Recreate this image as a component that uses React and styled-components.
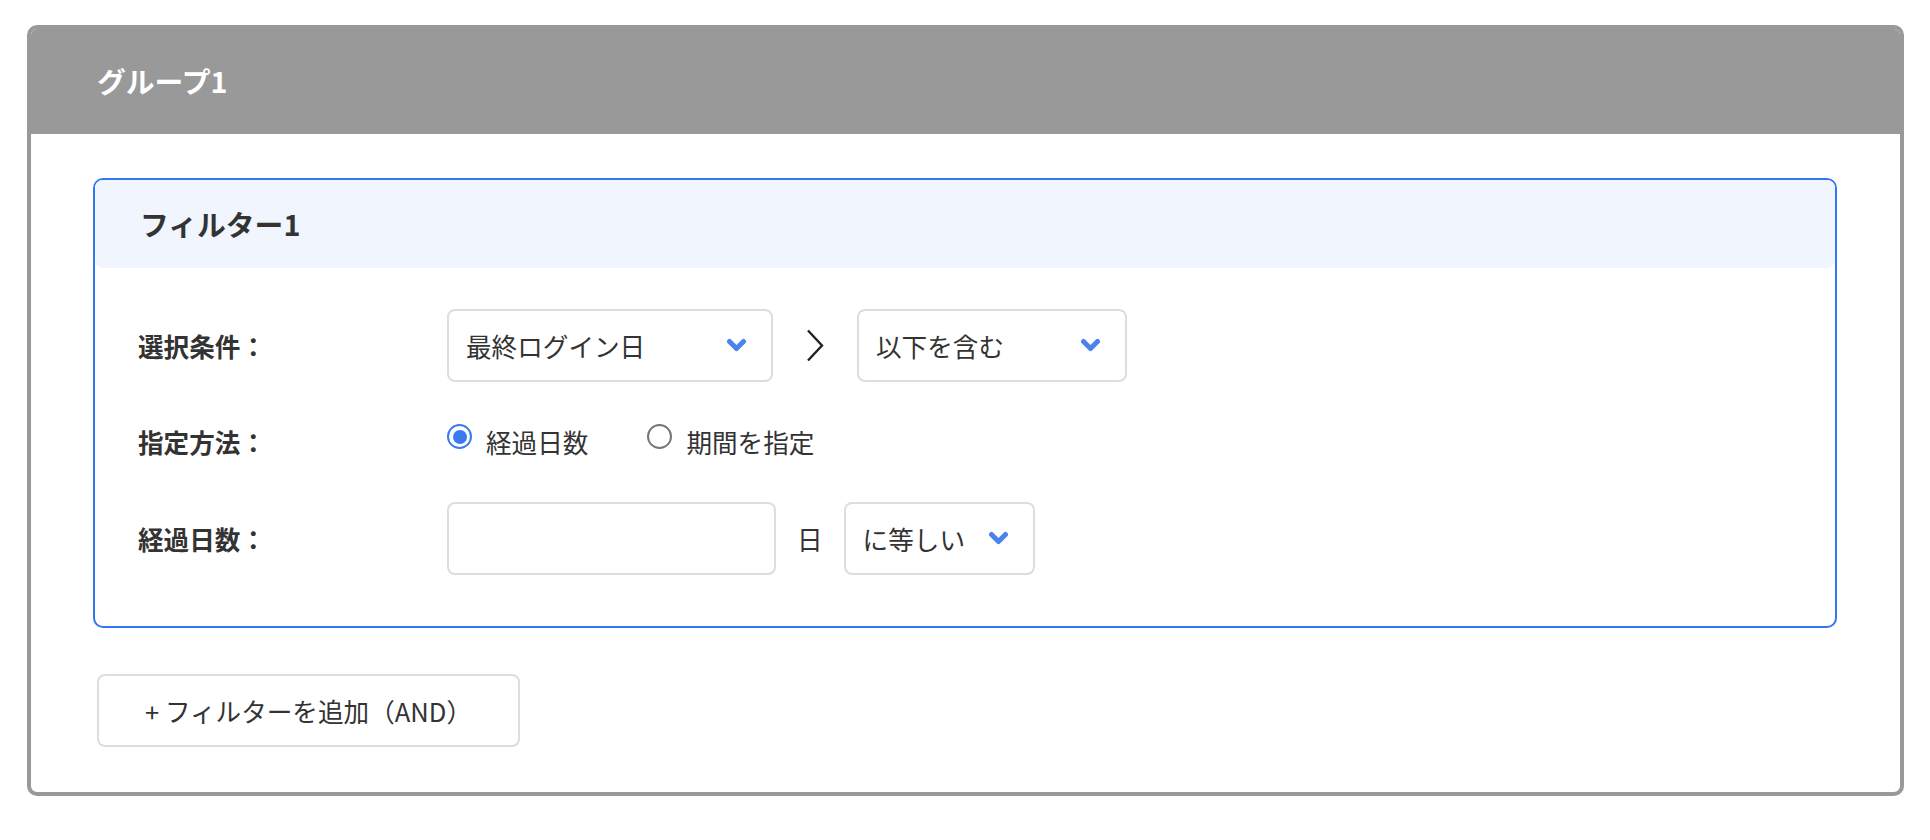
import React, { useState } from 'react';
import styled, { createGlobalStyle } from 'styled-components';

const GlobalStyle = createGlobalStyle`
    html, body {
        margin: 0;
        padding: 0;
        background: #fff;
    }
    body {
        font-family: "Noto Sans CJK JP", "Noto Sans", sans-serif;
        color: #333;
    }
`;

const Page = styled.div`
    padding: 25px 26px 25px 27px;
`;

const Group = styled.section`
    border: 4px solid #999;
    border-radius: 10px;
    overflow: hidden;
`;

const GroupHeader = styled.div`
    height: 105px;
    background: #999;
    display: flex;
    align-items: center;
    padding-left: 66px;
`;

const GroupTitle = styled.h2`
    margin: 0;
    font-size: 28.8px;
    font-weight: 700;
    line-height: 1;
    color: #fff;
`;

const GroupBody = styled.div`
    padding: 44px 63px 45px 62px;
`;

const Filter = styled.div`
    border: 2px solid #3476f2;
    border-radius: 10px;
`;

const FilterHeader = styled.div`
    height: 88px;
    background: #f1f6fe;
    border-radius: 8px;
    display: flex;
    align-items: center;
    padding-left: 45px;
`;

const FilterTitle = styled.h3`
    margin: 0;
    font-size: 28.8px;
    font-weight: 700;
    line-height: 1;
    color: #333;
`;

const FilterBody = styled.div`
    padding: 41px 43px 51px;
    display: flex;
    flex-direction: column;
    gap: 40px;
`;

const Row = styled.div`
    display: flex;
    align-items: center;
    min-height: ${props => props.height || '73px'};
`;

const Label = styled.div`
    width: 309px;
    flex-shrink: 0;
    font-size: 25.6px;
    font-weight: 700;
    line-height: 1;
    color: #333;
`;

const Controls = styled.div`
    display: flex;
    align-items: center;
    gap: ${props => props.gap || '21px'};
`;

const Select = styled.div`
    box-sizing: border-box;
    flex-shrink: 0;
    width: ${props => props.width || 'auto'};
    height: 73px;
    border: 2px solid #ddd;
    border-radius: 8px;
    background: #fff;
    display: flex;
    align-items: center;
    justify-content: space-between;
    gap: 23px;
    padding: 0 24px 0 17px;
    font-size: 25.6px;
    line-height: 1;
    color: #333;
    cursor: pointer;
`;

const Input = styled.input`
    box-sizing: border-box;
    width: 329px;
    height: 73px;
    border: 2px solid #ddd;
    border-radius: 8px;
    padding: 0 17px;
    font-family: inherit;
    font-size: 25.6px;
    color: #333;
    outline: none;
`;

const Unit = styled.span`
    font-size: 25.6px;
    line-height: 1;
    color: #333;
`;

const RadioGroup = styled.div`
    display: flex;
    align-items: center;
    gap: 59px;
`;

const RadioLabel = styled.label`
    display: flex;
    align-items: center;
    gap: 14px;
    font-size: 25.6px;
    line-height: 1;
    color: #333;
    cursor: pointer;
`;

const RadioMark = styled.span`
    box-sizing: border-box;
    width: 25px;
    height: 25px;
    margin-bottom: 11px;
    border-radius: 50%;
    border: ${props => props.checked ? '2.5px solid #3a7af2' : '2px solid #767676'};
    display: flex;
    align-items: center;
    justify-content: center;
    &::after {
        content: '';
        width: 14px;
        height: 14px;
        border-radius: 50%;
        background: ${props => props.checked ? '#3a7af2' : 'transparent'};
    }
`;

const AddButton = styled.button`
    box-sizing: border-box;
    margin: 46px 0 0 4px;
    width: 423px;
    height: 73px;
    border: 2px solid #ddd;
    border-radius: 8px;
    background: #fff;
    font-family: inherit;
    font-size: 25.6px;
    line-height: 1;
    color: #333;
    cursor: pointer;
`;

const Chevron = () => (
    <svg width="21" height="15" viewBox="0 0 21 15">
        <polyline points="3.5,3.5 10.5,10.5 17.5,3.5" fill="none" stroke="#4a84ea" strokeWidth="5" strokeLinecap="round" strokeLinejoin="round" />
    </svg>
);

const Arrow = () => (
    <svg width="18" height="33" viewBox="0 0 18 33">
        <polyline points="2,1.5 16,16.5 2,31.5" fill="none" stroke="#222" strokeWidth="2.4" strokeLinejoin="miter" />
    </svg>
);

function App() {
    const [method, setMethod] = useState('days');

    return (
        <Page>
            <GlobalStyle />
            <Group>
                <GroupHeader>
                    <GroupTitle>グループ1</GroupTitle>
                </GroupHeader>
                <GroupBody>
                    <Filter>
                        <FilterHeader>
                            <FilterTitle>フィルター1</FilterTitle>
                        </FilterHeader>
                        <FilterBody>
                            <Row>
                                <Label>選択条件：</Label>
                                <Controls gap="33px">
                                    <Select width="326px">
                                        最終ログイン日
                                        <Chevron />
                                    </Select>
                                    <Arrow />
                                    <Select width="270px">
                                        以下を含む
                                        <Chevron />
                                    </Select>
                                </Controls>
                            </Row>
                            <Row height="40px">
                                <Label>指定方法：</Label>
                                <RadioGroup>
                                    <RadioLabel onClick={() => setMethod('days')}>
                                        <RadioMark checked={method === 'days'} />
                                        経過日数
                                    </RadioLabel>
                                    <RadioLabel onClick={() => setMethod('range')}>
                                        <RadioMark checked={method === 'range'} />
                                        期間を指定
                                    </RadioLabel>
                                </RadioGroup>
                            </Row>
                            <Row>
                                <Label>経過日数：</Label>
                                <Controls>
                                    <Input type="text" />
                                    <Unit>日</Unit>
                                    <Select>
                                        に等しい
                                        <Chevron />
                                    </Select>
                                </Controls>
                            </Row>
                        </FilterBody>
                    </Filter>
                    <AddButton>+ フィルターを追加（AND）</AddButton>
                </GroupBody>
            </Group>
        </Page>
    );
}

export default App;
